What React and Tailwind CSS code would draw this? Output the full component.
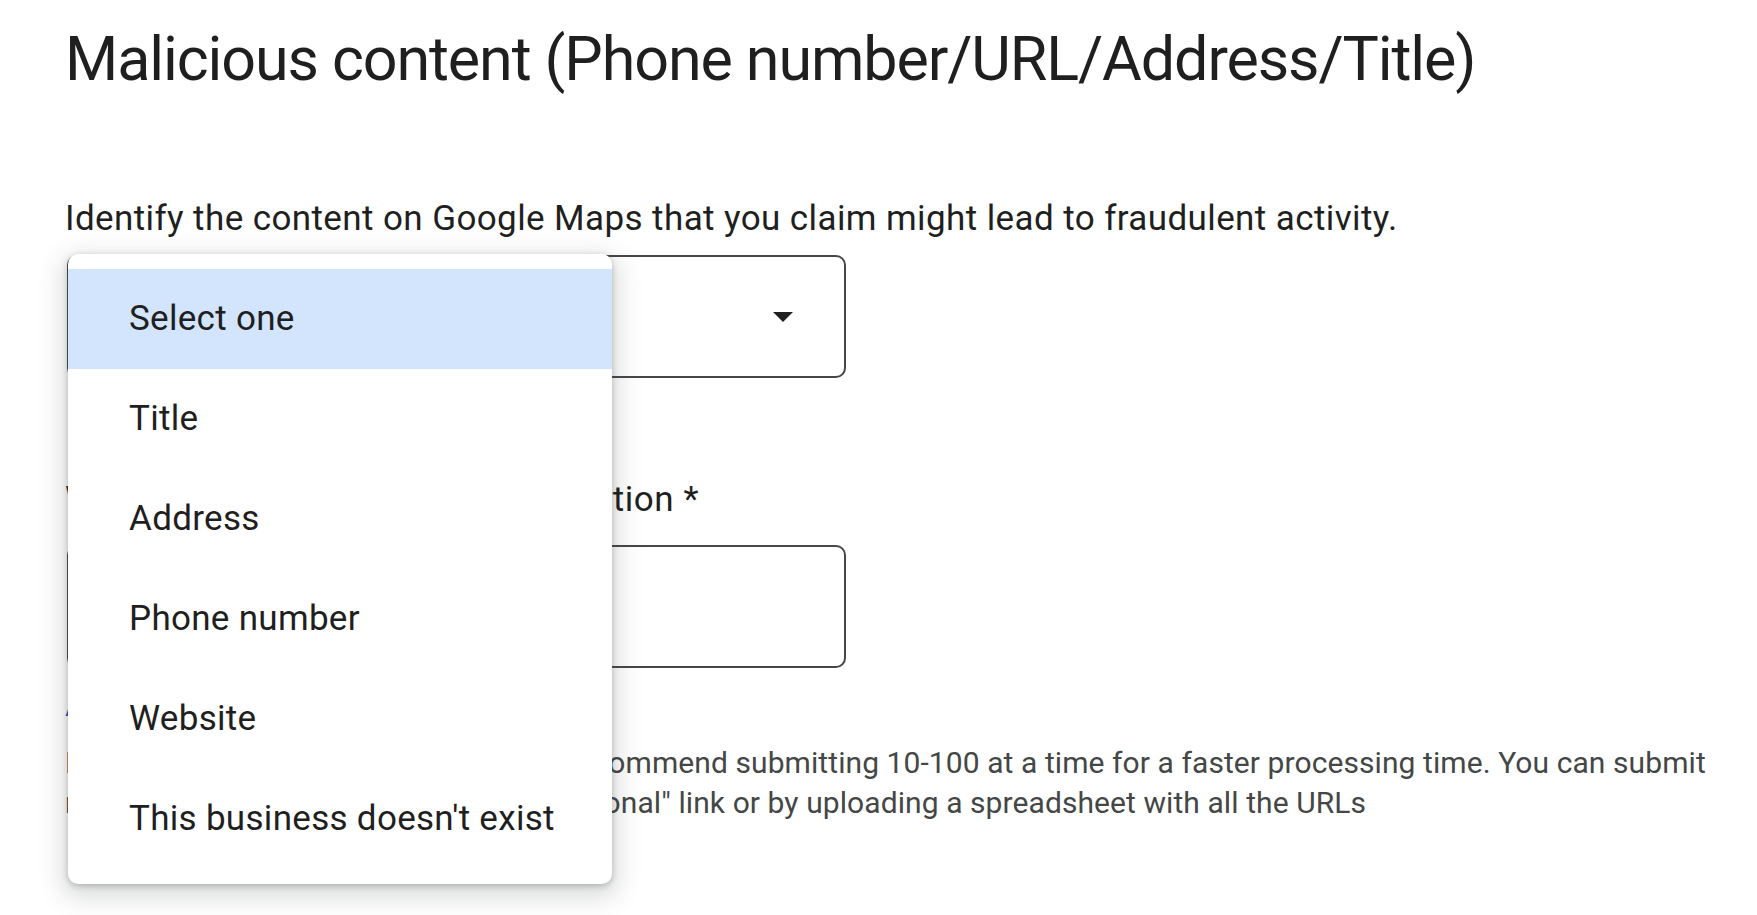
import React from "react";

const items = ["Select one", "Title", "Address", "Phone number", "Website", "This business doesn't exist"];

export default function App() {
  return (
    <div className="relative h-[915px] w-full overflow-hidden bg-white font-[Roboto,sans-serif] text-[#1f1f1f]">
      <div className="pl-[65px] pt-[24px]">
        <h1 className="text-[61px] leading-[70px] font-normal tracking-[-1.1px]">
          Malicious content (Phone number/URL/Address/Title)
        </h1>
        <p className="mt-[105px] text-[35px] leading-[40px] tracking-[0.4px]">
          Identify the content on Google Maps that you claim might lead to fraudulent activity.
        </p>
        <div className="ml-[2px] mt-[16px] flex h-[123px] w-[779px] items-center justify-between rounded-[10px] border-2 border-[#474747] pl-[60px] pr-[51px]">
          <span className="text-[35px] tracking-[0.3px]">Select one</span>
          <svg width="20" height="10" viewBox="0 0 20 10">
            <polygon points="0,0 20,0 10,10" fill="#1f1f1f" />
          </svg>
        </div>
        <p className="mt-[102px] text-[35px] leading-[40px] tracking-[0.55px]">
          Web URL(s) of the content in question *
        </p>
        <div className="ml-[2px] mt-[25px] h-[123px] w-[779px] rounded-[10px] border-2 border-[#474747]" />
        <p className="mt-[18px] text-[30px] leading-[40px] tracking-[0.1px] text-[#0b57d0]">Add additional</p>
        <p className="mt-[17px] whitespace-nowrap text-[30px] leading-[40px] tracking-[0.08px] text-[#444746]">
          Multiple URLs can be entered, but we recommend submitting 10-100 at a time for a faster processing time. You can submit
          <br />
          more URLs by clicking on the "Add additional" link or by uploading a spreadsheet with all the URLs
        </p>
      </div>

      <div className="absolute left-[68px] top-[254px] w-[544px] rounded-[10px] bg-white py-[15px] shadow-[0_8px_24px_6px_rgba(60,64,67,0.18),0_2px_6px_0_rgba(60,64,67,0.3)]">
        {items.map((it, i) => (
          <div
            key={it}
            className={
              i === 0
                ? "flex h-[100px] items-center bg-[#d3e5fd] pl-[61px] text-[35px] tracking-[0.3px]"
                : "flex h-[100px] items-center pl-[61px] text-[35px] tracking-[0.3px]"
            }
          >
            {it}
          </div>
        ))}
      </div>
    </div>
  );
}
